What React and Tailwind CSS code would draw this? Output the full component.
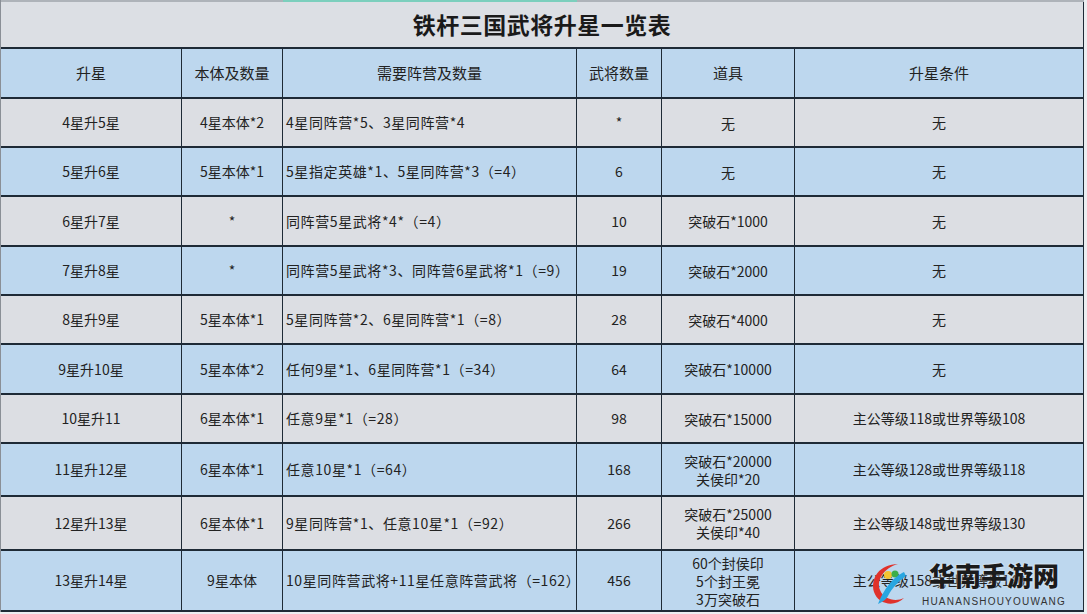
import React from "react";

const rows = [
  { a: "4星升5星", b: "4星本体*2", c: "4星同阵营*5、3星同阵营*4", d: "*", e: ["无"], f: "无", h: "h-[49px]", blue: false },
  { a: "5星升6星", b: "5星本体*1", c: "5星指定英雄*1、5星同阵营*3（=4）", d: "6", e: ["无"], f: "无", h: "h-[49px]", blue: true },
  { a: "6星升7星", b: "*", c: "同阵营5星武将*4*（=4）", d: "10", e: ["突破石*1000"], f: "无", h: "h-[50px]", blue: false },
  { a: "7星升8星", b: "*", c: "同阵营5星武将*3、同阵营6星武将*1（=9）", d: "19", e: ["突破石*2000"], f: "无", h: "h-[49px]", blue: true },
  { a: "8星升9星", b: "5星本体*1", c: "5星同阵营*2、6星同阵营*1（=8）", d: "28", e: ["突破石*4000"], f: "无", h: "h-[49px]", blue: false },
  { a: "9星升10星", b: "5星本体*2", c: "任何9星*1、6星同阵营*1（=34）", d: "64", e: ["突破石*10000"], f: "无", h: "h-[50px]", blue: true },
  { a: "10星升11", b: "6星本体*1", c: "任意9星*1（=28）", d: "98", e: ["突破石*15000"], f: "主公等级118或世界等级108", h: "h-[49px]", blue: false },
  { a: "11星升12星", b: "6星本体*1", c: "任意10星*1（=64）", d: "168", e: ["突破石*20000", "关侯印*20"], f: "主公等级128或世界等级118", h: "h-[53px]", blue: true },
  { a: "12星升13星", b: "6星本体*1", c: "9星同阵营*1、任意10星*1（=92）", d: "266", e: ["突破石*25000", "关侯印*40"], f: "主公等级148或世界等级130", h: "h-[54px]", blue: false },
  { a: "13星升14星", b: "9星本体", c: "10星同阵营武将+11星任意阵营武将（=162）", d: "456", e: ["60个封侯印", "5个封王冕", "3万突破石"], f: "主公等级158或世界等级140", h: "h-[61px]", blue: true },
];

const cols = "grid grid-cols-[181px_101px_294px_85px_133px_289px]";
const cell = "flex items-center justify-center border-r border-[#1e2a36] text-center";

function Watermark() {
  return (
    <div className="pointer-events-none absolute left-[868px] top-[560px] flex items-center gap-[12px]">
      <svg width="42" height="48" viewBox="0 0 42 48">
        <path d="M30 4 C12 4 2 18 6 32 C10 44 26 48 36 38 C28 42 16 40 12 30 C8 20 16 8 30 4 Z" fill="#e0322b" />
        <circle cx="20" cy="15" r="4" fill="#f4c430" />
        <circle cx="27" cy="14" r="3.5" fill="#3cae4a" />
        <path d="M36 12 C28 16 18 24 10 44 C14 42 18 40 20 36 C24 28 30 22 38 16 Z" fill="#29a6e0" />
      </svg>
      <div className="flex flex-col items-center">
        <div className="font-['Noto_Sans_CJK_SC',sans-serif] text-[26px] font-black leading-[30px] text-[#1b1b1b] [text-shadow:0_0_2px_#ffffff]">
          华南手游网
        </div>
        <div className="mt-[6px] font-['Liberation_Sans',sans-serif] text-[10px] leading-[12px] tracking-[1.2px] text-[#333]">
          HUANANSHOUYOUWANG
        </div>
      </div>
    </div>
  );
}

export default function App() {
  return (
    <div className="relative h-[614px] w-[1087px] overflow-hidden bg-[#eceef1] font-['Noto_Sans_CJK_SC',sans-serif] text-[#222]">
      <div className="w-[1084px] border-l border-[#8a8f96]">
        <div className="flex h-[2px]">
          <div className="w-[282px] bg-[#aeb3b9]" />
          <div className="w-[294px] bg-[#7ccfbd]" />
          <div className="flex-1 bg-[#aeb3b9]" />
        </div>
        <div className="flex h-[47px] items-center justify-center border-b-2 border-r border-[#1e2a36] bg-[#dcdfe4] text-[23px] font-bold tracking-[0.5px] text-[#1a1a1a]">
          铁杆三国武将升星一览表
        </div>
        <div className={`${cols} h-[50px] border-b-2 border-[#1e2a36] bg-[#bdd7ee] text-[15px]`}>
          <div className={cell}>升星</div>
          <div className={cell}>本体及数量</div>
          <div className={cell}>需要阵营及数量</div>
          <div className={cell}>武将数量</div>
          <div className={cell}>道具</div>
          <div className={cell}>升星条件</div>
        </div>
        {rows.map((r, i) => (
          <div
            key={i}
            className={`${cols} ${r.h} border-b-2 border-[#1e2a36] text-[14px] ${r.blue ? "bg-[#bdd7ee]" : "bg-[#dcdee3]"}`}
          >
            <div className={cell}>{r.a}</div>
            <div className={cell}>{r.b}</div>
            <div className="flex items-center border-r border-[#1e2a36] pl-[3px] tracking-[0.6px] whitespace-nowrap">{r.c}</div>
            <div className={cell}>{r.d}</div>
            <div className={`${cell} flex-col leading-[18px]`}>
              {r.e.map((t, j) => (
                <span key={j}>{t}</span>
              ))}
            </div>
            <div className={cell}>{r.f}</div>
          </div>
        ))}
      </div>
      <Watermark />
    </div>
  );
}
